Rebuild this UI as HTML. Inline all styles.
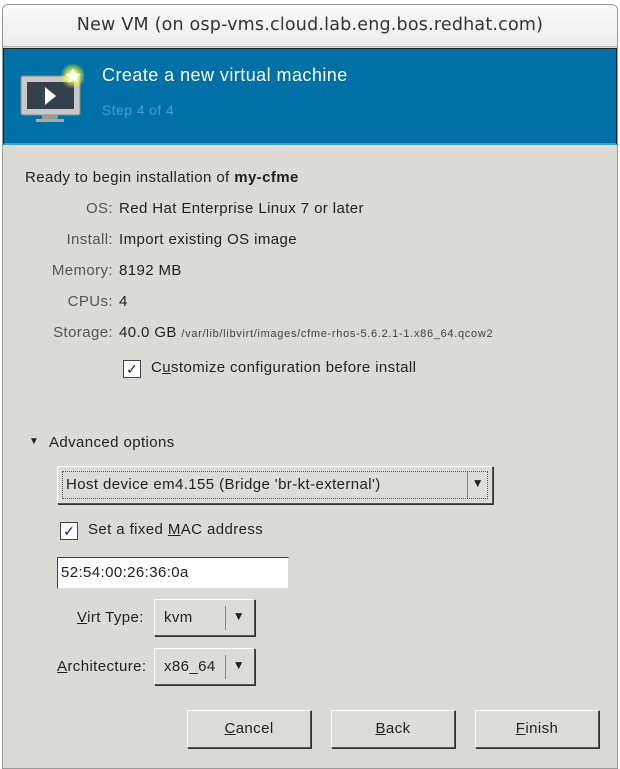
<!DOCTYPE html>
<html><head><style>
*{margin:0;padding:0;box-sizing:border-box}
body{width:620px;height:769px;background:#fff;font-family:"Liberation Sans",sans-serif;font-size:15px;letter-spacing:0.4px;color:#222;position:relative;overflow:hidden}
.win{position:absolute;left:2px;top:4px;width:616px;height:765px;border:1px solid #999;border-radius:6px 6px 0 0;background:#dcdad5;overflow:hidden}
.title{position:absolute;left:0;top:0;width:100%;height:42px;background:linear-gradient(#fafafa,#ececec);border-bottom:1px solid #bbb;text-align:center;line-height:40px;font-family:"DejaVu Sans",sans-serif;font-size:17.5px;letter-spacing:0.2px;color:#333}
.banner{position:absolute;left:0;top:43px;width:100%;height:97px;background:#0071a7;border:1px solid #222;border-bottom:2px solid #3aa0dc}
.t{position:absolute;white-space:nowrap}
.lbl{color:#555;text-align:right;width:110px;left:0}
.chk{position:absolute;width:18px;height:18px;border:1px solid #444;background:#fff;font-size:14px;line-height:16px;text-align:center;letter-spacing:0}
.btn{position:absolute;border:1px solid #555;border-top-color:#fff;border-left-color:#fff;box-shadow:1px 1px 0 #333;background:#dedcd7;text-align:center}
u{text-decoration:underline}
</style></head><body>
<div class="win">
<div class="title">New VM (on osp-vms.cloud.lab.eng.bos.redhat.com)</div>
<div class="banner">
 <svg style="position:absolute;left:8px;top:12px" width="72" height="66" viewBox="0 0 72 66">
  <defs><radialGradient id="g"><stop offset="0.3" stop-color="#ffff60"/><stop offset="1" stop-color="#ffff00" stop-opacity="0"/></radialGradient></defs>
  <rect x="9" y="15" width="59" height="39" rx="2" fill="#c8c8c8" stroke="#888"/>
  <rect x="15" y="21" width="47" height="27" fill="#34404c"/>
  <polygon points="33,26 33,44 44,35" fill="#fff"/>
  <rect x="30" y="54" width="16" height="4" fill="#999"/>
  <rect x="24" y="58" width="28" height="3" fill="#aaa"/>
  <circle cx="61" cy="15" r="13" fill="url(#g)"/>
  <polygon points="61,7 63.5,12.5 69,13 64.8,16.8 66,22 61,19.3 56,22 57.2,16.8 53,13 58.5,12.5" fill="#fff"/>
 </svg>
 <div class="t" style="left:98px;top:16px;color:#fff;font-size:18px;letter-spacing:0.45px">Create a new virtual machine</div>
 <div class="t" style="left:98px;top:53px;color:#3d9fd8;font-size:14px">Step 4 of 4</div>
</div>
<div class="t" style="left:22px;top:164px">Ready to begin installation of <b>my-cfme</b></div>
<div class="t lbl" style="top:195px">OS:</div><div class="t" style="left:116px;top:195px">Red Hat Enterprise Linux 7 or later</div>
<div class="t lbl" style="top:226px">Install:</div><div class="t" style="left:116px;top:226px">Import existing OS image</div>
<div class="t lbl" style="top:257px">Memory:</div><div class="t" style="left:116px;top:257px">8192 MB</div>
<div class="t lbl" style="top:288px">CPUs:</div><div class="t" style="left:116px;top:288px">4</div>
<div class="t lbl" style="top:319px">Storage:</div><div class="t" style="left:116px;top:319px">40.0 GB <span style="font-size:11px;letter-spacing:0.7px;color:#444">/var/lib/libvirt/images/cfme-rhos-5.6.2.1-1.x86_64.qcow2</span></div>
<div class="chk" style="left:120px;top:355px">✓</div><div class="t" style="left:148px;top:354px">C<u>u</u>stomize configuration before install</div>
<div class="t" style="left:26px;top:431px;font-size:10px">▼</div><div class="t" style="left:46px;top:429px">Advanced options</div>
<div class="btn" style="left:54px;top:461px;width:436px;height:38px"><div style="position:absolute;left:4px;top:4px;right:4px;bottom:4px;border:1px dotted #555"></div><div class="t" style="left:8px;top:9px">Host device em4.155 (Bridge 'br-kt-external')</div><div style="position:absolute;right:24px;top:5px;height:26px;border-left:1px solid #888"></div><div class="t" style="right:8px;top:9px;font-size:12px">▼</div></div>
<div class="chk" style="left:57px;top:517px">✓</div><div class="t" style="left:85px;top:516px">Set a fixed <u>M</u>AC address</div>
<div style="position:absolute;left:54px;top:552px;width:232px;height:32px;background:#fff;border:1px solid #444;border-right-color:#ddd;border-bottom-color:#ddd"></div>
<div class="t" style="left:58px;top:559px">52:54:00:26:36:0a</div>
<div class="t" style="left:74px;top:604px"><u>V</u>irt Type:</div>
<div class="btn" style="left:151px;top:594px;width:101px;height:37px"><div class="t" style="left:9px;top:9px">kvm</div><div style="position:absolute;right:28px;top:6px;height:24px;border-left:1px solid #888"></div><div class="t" style="right:9px;top:9px;font-size:12px">▼</div></div>
<div class="t" style="left:54px;top:653px"><u>A</u>rchitecture:</div>
<div class="btn" style="left:151px;top:643px;width:101px;height:37px"><div class="t" style="left:9px;top:9px">x86_64</div><div style="position:absolute;right:28px;top:6px;height:24px;border-left:1px solid #888"></div><div class="t" style="right:9px;top:9px;font-size:12px">▼</div></div>
<div class="btn" style="left:184px;top:705px;width:124px;height:38px;line-height:36px"><u>C</u>ancel</div>
<div class="btn" style="left:328px;top:705px;width:124px;height:38px;line-height:36px"><u>B</u>ack</div>
<div class="btn" style="left:472px;top:705px;width:124px;height:38px;line-height:36px"><u>F</u>inish</div>
</div>
</body></html>
